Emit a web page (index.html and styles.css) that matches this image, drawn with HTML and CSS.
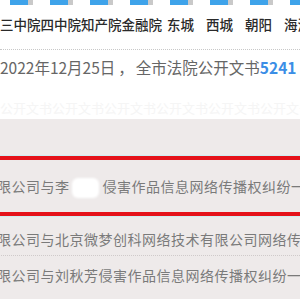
FILE: index.html
```html
<!DOCTYPE html>
<html lang="zh">
<head>
<meta charset="utf-8">
<link rel="stylesheet" href="styles.css">
</head>
<body>
<div class="topbar"></div>
<nav class="nav">
  <span class="court">三中院</span><span class="court">四中院</span><span class="court">知产院</span><span class="court">金融院</span>
  <span class="dist first">东城</span><span class="dist">西城</span><span class="dist">朝阳</span><span class="dist">海淀</span>
</nav>
<div class="stat"><span class="date">2022年12月25日</span><span class="sep">，</span><span class="label">全市法院公开文书</span><b class="num">5241</b></div>
<div class="faint">公开文书公开文书公开文书公开文书公开文书公开文书</div>
<div class="list">
  <div class="frag">s</div>
  <div class="hl">
    <div class="row row-hl">限公司与李<span class="blur"></span>侵害作品信息网络传播权纠纷一审</div>
  </div>
  <div class="row row-2">限公司与北京微梦创科网络技术有限公司网络传播</div>
  <div class="row row-3">限公司与刘秋芳侵害作品信息网络传播权纠纷一审</div>
</div>
</body>
</html>
```
FILE: styles.css
```css
html, body {
  margin: 0;
  padding: 0;
  background: #ffffff;
}
body {
  width: 300px;
  height: 300px;
  overflow: hidden;
  font-family: "Noto Sans CJK SC", "Noto Sans", sans-serif;
}
.topbar {
  height: 5px;
  background: repeating-linear-gradient(90deg, #ffffff 0 10px, #3ea3ea 10px 28px, #c9c9c9 28px 33px, #ffffff 33px 40px);
}
.nav {
  display: flex;
  height: 44px;
  line-height: 38px;
  font-size: 13.5px;
  color: #2a2a2a;
  white-space: nowrap;
  font-weight: 500;
}
.dist {
  margin-left: 12px;
}
.dist.first {
  margin-left: 5px;
}
.stat {
  display: flex;
  border-top: 1px dotted #c8c8c8;
  height: 34px;
  line-height: 34px;
  font-size: 15.5px;
  color: #666666;
  white-space: nowrap;
}
.sep {
  margin-left: 3px;
  margin-right: 2px;
}
.num {
  color: #3b8ee6;
  font-weight: 700;
}
.faint {
  height: 35px;
  line-height: 48px;
  font-size: 13px;
  color: #f5f5f5;
  white-space: nowrap;
  overflow: hidden;
}
.list {
  background: #eeeaea;
  height: 180px;
}
.frag {
  height: 37px;
  line-height: 48px;
  font-size: 10px;
  color: #777;
  margin-left: -5px;
}
.hl {
  border-top: 4px solid #e5121a;
  border-bottom: 4px solid #e5121a;
  box-shadow: 0 -1px 0 #cdeef2, 0 1px 0 #cdeef2;
}
.row {
  font-size: 14px;
  color: #7a7a7a;
  white-space: nowrap;
  overflow: hidden;
  margin-left: -3px;
  letter-spacing: 0.5px;
}
.row-hl {
  line-height: 52px;
  height: 52px;
}
.blur {
  display: inline-block;
  width: 27px;
  height: 20px;
  margin: 0 4px 0 2px;
  vertical-align: middle;
  background: #ffffff;
  border-radius: 6px;
  filter: blur(1px);
}
.row-2 {
  margin-top: 7px;
  height: 32px;
  line-height: 32px;
  border-bottom: 1px dotted #cfcaca;
}
.row-3 {
  height: 36px;
  line-height: 38px;
}
```
